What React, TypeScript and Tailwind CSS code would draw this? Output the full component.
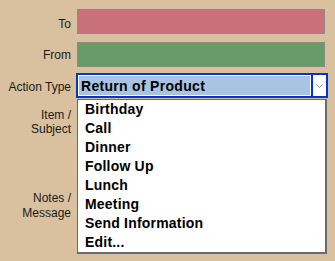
import React from "react";

const items = ["Birthday", "Call", "Dinner", "Follow Up", "Lunch", "Meeting", "Send Information", "Edit..."];

export default function App() {
  return (
    <div className="w-[335px] h-[261px] bg-[#d9c1a0] overflow-hidden font-['Liberation_Sans',Arial,sans-serif] text-[12px] text-[#1a1a1a]">
      <div className="pt-[9px] flex flex-col">
        {/* To */}
        <div className="flex h-[25px]">
          <div className="w-[71px] text-right pt-[8px] leading-[14px]">To</div>
          <div className="ml-[6px] w-[248px] h-[25px] bg-[#c9717b] border border-[#8f8a86]" />
        </div>
        {/* From */}
        <div className="flex h-[25px] mt-[8px]">
          <div className="w-[71px] text-right pt-[6px] leading-[14px]">From</div>
          <div className="ml-[6px] w-[248px] h-[25px] bg-[#699a69] border border-[#8f8a86]" />
        </div>
        {/* Action Type */}
        <div className="flex h-[25px] mt-[6px]">
          <div className="w-[71px] text-right pt-[7px] leading-[14px]">Action Type</div>
          <div className="relative ml-[5px] w-[252px] h-[25px]">
            <div className="flex w-full h-full border-2 border-[#0036cc] bg-white">
              <div className="flex-1 m-[1px] bg-[#a8c4e2] flex items-center pl-[2px] text-[14px] font-bold tracking-[0.3px] text-black leading-none">
                Return of Product
              </div>
              <div className="w-[2px] bg-[#0036cc]" />
              <div className="w-[13px] bg-white flex items-center justify-center">
                <svg width="7" height="4" viewBox="0 0 7 4">
                  <path d="M0.5 0.5 L3.5 3.5 L6.5 0.5" fill="none" stroke="#8a9ad0" strokeWidth="1" />
                </svg>
              </div>
            </div>
            <div className="absolute left-[1px] top-[26px] w-[250px] bg-white border border-[#6b6b6b] border-r-2 border-b-2 z-10">
              {items.map((t) => (
                <div key={t} className="h-[19px] leading-[19px] pl-[7px] text-[14px] font-bold tracking-[0.2px] text-black whitespace-nowrap">
                  {t}
                </div>
              ))}
            </div>
          </div>
        </div>
        {/* Item / Subject */}
        <div className="flex mt-[10px]">
          <div className="w-[71px] text-right leading-[14px]">
            Item /<br />Subject
          </div>
        </div>
        {/* Notes / Message */}
        <div className="flex mt-[55px]">
          <div className="w-[71px] text-right leading-[15px]">
            Notes /<br />Message
          </div>
        </div>
      </div>
    </div>
  );
}
